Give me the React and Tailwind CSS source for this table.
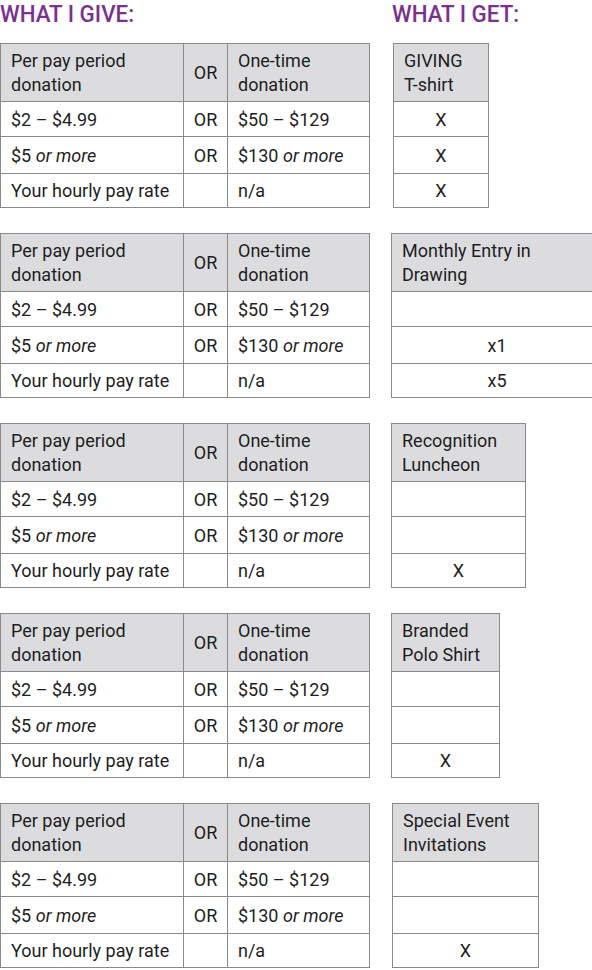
const rowsLeft = [
  { a: '$2 – $4.99', or: 'OR', b: '$50 – $129' },
  { a: <>$5 <i>or more</i></>, or: 'OR', b: <>$130 <i>or more</i></> },
  { a: 'Your hourly pay rate', or: '', b: 'n/a' }
]

const rowH = ['h-[35px]', 'h-[37px]', 'h-[34px]']

const blocks = [
  { title: ['GIVING', 'T-shirt'], width: 'w-[96px]', ml: 'ml-[23px]', cells: ['X', 'X', 'X'] },
  { title: ['Monthly Entry in', 'Drawing'], width: 'w-[212px]', ml: 'ml-[21px]', cells: ['', 'x1', 'x5'] },
  { title: ['Recognition', 'Luncheon'], width: 'w-[135px]', ml: 'ml-[21px]', cells: ['', '', 'X'] },
  { title: ['Branded', 'Polo Shirt'], width: 'w-[109px]', ml: 'ml-[21px]', cells: ['', '', 'X'] },
  { title: ['Special Event', 'Invitations'], width: 'w-[147px]', ml: 'ml-[22px]', cells: ['', '', 'X'] }
]

const cell = 'border border-[#8a8a8a]'

function GiveTable() {
  return (
    <table className="w-[369px] border-collapse table-fixed shrink-0">
      <colgroup>
        <col className="w-[183px]" />
        <col className="w-[44px]" />
        <col className="w-[142px]" />
      </colgroup>
      <thead>
        <tr className="h-[58px] bg-[#dcdcde]">
          <th className={`${cell} text-left font-normal px-[10px] leading-[24px] align-middle`}>Per pay period<br />donation</th>
          <th className={`${cell} font-normal text-center`}>OR</th>
          <th className={`${cell} text-left font-normal px-[10px] leading-[24px]`}>One-time<br />donation</th>
        </tr>
      </thead>
      <tbody>
        {rowsLeft.map((r, i) => (
          <tr key={i} className={rowH[i]}>
            <td className={`${cell} px-[10px] whitespace-nowrap`}>{r.a}</td>
            <td className={`${cell} text-center`}>{r.or}</td>
            <td className={`${cell} px-[10px] whitespace-nowrap`}>{r.b}</td>
          </tr>
        ))}
      </tbody>
    </table>
  )
}

function GetTable({ block }) {
  return (
    <table className={`${block.width} ${block.ml} border-collapse shrink-0`}>
      <thead>
        <tr className="h-[58px] bg-[#dcdcde]">
          <th className={`${cell} text-left font-normal px-[10px] leading-[24px] whitespace-nowrap`}>
            {block.title[0]}<br />{block.title[1]}
          </th>
        </tr>
      </thead>
      <tbody>
        {block.cells.map((c, i) => (
          <tr key={i} className={rowH[i]}>
            <td className={`${cell} text-center`}>{c}</td>
          </tr>
        ))}
      </tbody>
    </table>
  )
}

export default function App() {
  return (
    <div className="w-[592px] h-[970px] overflow-hidden bg-white text-[#1e1e1e] text-[18px] font-['Roboto',sans-serif]">
      <div className="flex h-[43px] text-[#7c2f8f] text-[24px] font-medium leading-[28px] uppercase">
        <div className="w-[392px] scale-x-[0.93] origin-left whitespace-nowrap">WHAT I GIVE:</div>
        <div className="scale-x-[0.93] origin-left whitespace-nowrap">WHAT I GET:</div>
      </div>
      <div className="flex flex-col gap-[25px]">
        {blocks.map((b, i) => (
          <div key={i} className="flex items-start">
            <GiveTable />
            <GetTable block={b} />
          </div>
        ))}
      </div>
    </div>
  )
}
